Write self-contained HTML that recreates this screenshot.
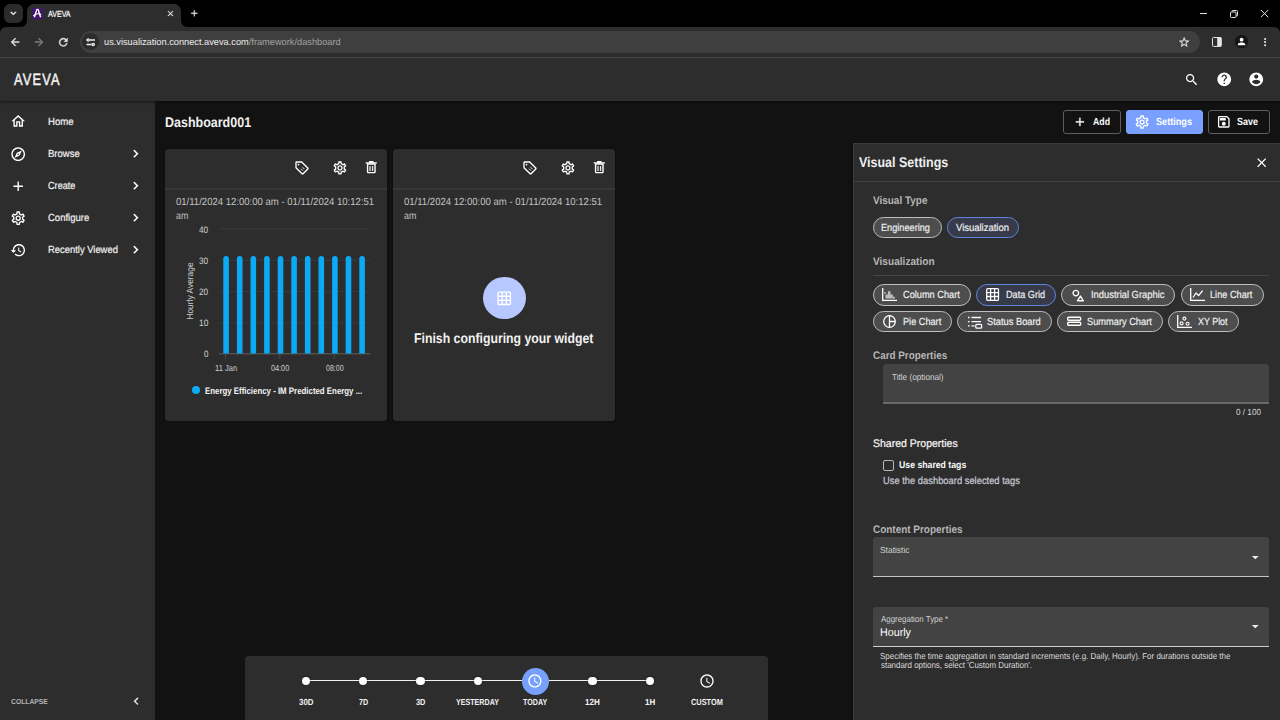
<!DOCTYPE html>
<html lang="en">
<head>
<meta charset="utf-8">
<title>AVEVA</title>
<style>
*{box-sizing:border-box;margin:0;padding:0}
html,body{width:1280px;height:720px;overflow:hidden;background:#000;font-family:"Liberation Sans",sans-serif;color:#fff}
.abs{position:absolute}
.t{position:absolute;white-space:pre;line-height:1;text-rendering:geometricPrecision}
svg{position:absolute;overflow:visible}
#tabsearch{left:4px;top:4px;width:19px;height:19px;border-radius:6px;background:#2b2b2b}
#tab{left:27px;top:4px;width:154px;height:24px;border-radius:7px 7px 0 0;background:#2d2d2d}
#toolbar{left:0;top:27px;width:1280px;height:30px;background:#2d2d2d;border-radius:6px 6px 0 0}
#urlpill{left:80px;top:31px;width:1120px;height:22px;border-radius:11px;background:#3f3f3f}
#sep{left:0;top:57px;width:1280px;height:1px;background:#4d4d4d}
#apphdr{left:0;top:58px;width:1280px;height:42.5px;background:#2d2d2d;box-shadow:0 1px 3px rgba(0,0,0,.55);z-index:3}
#side{left:0;top:100px;width:155px;height:620px;background:#2d2d2d}
#main{left:155px;top:100px;width:1125px;height:620px;background:#121212}
.card{position:absolute;top:148.8px;width:222px;height:271.8px;background:#2d2d2d;border-radius:3.5px;box-shadow:0 0 2px rgba(0,0,0,.6)}
.card .hl{position:absolute;left:0;top:39.2px;width:100%;height:1.6px;background:#373737}
#panel{left:853px;top:143px;width:427px;height:577px;background:#2d2d2d;border-left:1px solid #3d3d3d;border-top:1px solid #3a3a3a;box-shadow:-2px 0 4px rgba(0,0,0,.22)}
#timebar{left:245px;top:656px;width:523px;height:64px;background:#2d2d2d;border-radius:4px 4px 0 0}
.btn{position:absolute;top:110px;height:24px;border:1px solid #5e5e5e;border-radius:3px}
.chip{position:absolute;height:21.5px;border-radius:11px;border:1px solid #bdbdbd;background:#4d4d4d}
.chip.sel{background:#363a49;border-color:#5f86dc}
.field{position:absolute;background:#434343;border-radius:3px 3px 0 0}
.hline{position:absolute;height:1px}
</style>
</head>
<body>
<div class="abs" id="tabsearch"></div>
<div class="abs" id="toolbar"></div>
<div class="abs" id="tab"></div>
<svg style="left:21px;top:21px" width="6" height="6" viewBox="0 0 6 6"><path d="M6 0v6H0A6 6 0 0 0 6 0z" fill="#2d2d2d"/></svg>
<svg style="left:181px;top:21px" width="6" height="6" viewBox="0 0 6 6"><path d="M0 0v6h6A6 6 0 0 1 0 0z" fill="#2d2d2d"/></svg>
<div class="abs" id="urlpill"></div>
<div class="abs" id="sep"></div>
<svg style="left:8.20px;top:8.10px;" width="10.6" height="10.6" viewBox="0 0 24 24" fill="#f0f0f0" stroke="#f0f0f0" stroke-width="1.3"><path d="M7.41 8.59L12 13.17l4.59-4.58L18 10l-6 6-6-6 1.41-1.41z"/></svg>
<div class="abs" style="left:32px;top:8.2px;width:10.8px;height:10.5px;background:#41166f"></div>
<svg style="left:32px;top:8.2px" width="10.8" height="10.5" viewBox="0 0 108 105"><path d="M24 92L49 14h12l25 78" fill="none" stroke="#fff" stroke-width="14" stroke-linejoin="round"/><path d="M12 78C36 56 70 54 92 66" fill="none" stroke="#fff" stroke-width="11"/></svg>
<div class="t" style="left:48.21px;top:10.25px;font-size:8.8px;color:#fff;transform:scaleX(0.8058);transform-origin:0 0;-webkit-text-stroke:0.2px #fff;">AVEVA</div>
<svg style="left:166.10px;top:9.10px;" width="9" height="9" viewBox="0 0 24 24" fill="#e8e8e8" stroke="#e8e8e8" stroke-width="0.8"><path d="M19 6.41L17.59 5 12 10.59 6.41 5 5 6.41 10.59 12 5 17.59 6.41 19 12 13.41 17.59 19 19 17.59 13.41 12z"/></svg>
<svg style="left:189.05px;top:8.35px;" width="10.5" height="10.5" viewBox="0 0 24 24" fill="#efefef" stroke="#efefef" stroke-width="0.5"><path d="M19 13h-6v6h-2v-6H5v-2h6V5h2v6h6v2z"/></svg>
<div class="abs" style="left:1200px;top:13px;width:7px;height:1px;background:#e0e0e0"></div>
<svg style="left:1230px;top:9.5px" width="8" height="8" viewBox="0 0 8 8" fill="none" stroke="#e0e0e0" stroke-width="1"><rect x="0.5" y="2" width="5.5" height="5.5" rx="1"/><path d="M2 2V1.5a1 1 0 0 1 1-1h3.5a1 1 0 0 1 1 1V5a1 1 0 0 1-1 1H6"/></svg>
<svg style="left:1261px;top:9.8px" width="7.2" height="7.2" viewBox="0 0 7.2 7.2" stroke="#e6e6e6" stroke-width="1"><path d="M0 0L7.2 7.2M7.2 0L0 7.2"/></svg>
<svg style="left:8.90px;top:35.90px;" width="12.2" height="12.2" viewBox="0 0 24 24" fill="#e2e2e2" stroke="#e2e2e2" stroke-width="1"><path d="M20 11H7.83l5.59-5.59L12 4l-8 8 8 8 1.41-1.41L7.83 13H20v-2z"/></svg>
<svg style="left:32.60px;top:35.90px;" width="12.2" height="12.2" viewBox="0 0 24 24" fill="#7c7c7c" stroke="#7c7c7c" stroke-width="1"><path d="M12 4l-1.41 1.41L16.17 11H4v2h12.17l-5.58 5.59L12 20l8-8z"/></svg>
<svg style="left:56.70px;top:35.70px;" width="12.6" height="12.6" viewBox="0 0 24 24" fill="#e2e2e2" stroke="#e2e2e2" stroke-width="0.8"><path d="M17.65 6.35C16.2 4.9 14.21 4 12 4c-4.42 0-7.99 3.58-7.99 8s3.57 8 7.99 8c3.73 0 6.84-2.55 7.73-6h-2.08c-.82 2.33-3.04 4-5.65 4-3.31 0-6-2.69-6-6s2.690-6 6-6c1.66 0 3.14.69 4.22 1.78L13 11h7V4l-2.35 2.35z"/></svg>
<div class="abs" style="left:82.4px;top:33.4px;width:16.6px;height:16.6px;border-radius:50%;background:#2c2c2c"></div>
<svg style="left:86px;top:37.5px" width="9.5" height="8.5" viewBox="0 0 95 85" fill="none" stroke="#ececec" stroke-width="13"><path d="M38 20H90M5 20h4M5 65h52M86 65h4"/><circle cx="22" cy="20" r="11"/><circle cx="72" cy="65" r="11"/></svg>
<div class="t" style="left:104.46px;top:37.25px;font-size:9.4px;color:#ececec;transform:scaleX(0.9852);transform-origin:0 0;">us.visualization.connect.aveva.com<span style="color:#a2a2a2">/framework/dashboard</span></div>
<svg style="left:1177.80px;top:35.50px;" width="12.4" height="12.4" viewBox="0 0 24 24" fill="#e2e2e2" stroke="#e2e2e2" stroke-width="0.5"><path d="M22 9.24l-7.19-.62L12 2 9.19 8.63 2 9.24l5.46 4.73L5.82 21 12 17.27 18.18 21l-1.630-7.03L22 9.24zM12 15.4l-3.76 2.27 1-4.28-3.320-2.88 4.38-.38L12 6.1l1.71 4.04 4.38.38-3.320 2.88 1 4.28L12 15.4z"/></svg>
<svg style="left:1212.2px;top:37px" width="9.8" height="9.9" viewBox="0 0 98 99"><rect x="5" y="5" width="88" height="89" rx="10" fill="none" stroke="#e4e4e4" stroke-width="10"/><rect x="52" y="5" width="41" height="89" fill="#e4e4e4"/></svg>
<div class="abs" style="left:1235px;top:35.1px;width:12.7px;height:12.7px;border-radius:50%;background:#151515"></div>
<svg style="left:1235.70px;top:36.10px;" width="11.2" height="11.2" viewBox="0 0 24 24" fill="#fff"><path d="M12 12c2.21 0 4-1.79 4-4s-1.79-4-4-4-4 1.79-4 4 1.79 4 4 4zm0 2c-2.670 0-8 1.34-8 4v2h16v-2c0-2.660-5.330-4-8-4z"/></svg>
<svg style="left:1259.20px;top:35.90px;" width="12.2" height="12.2" viewBox="0 0 24 24" fill="#e2e2e2"><path d="M12 8c1.1 0 2-.9 2-2s-.9-2-2-2-2 .9-2 2 .9 2 2 2zm0 2c-1.1 0-2 .9-2 2s.9 2 2 2 2-.9 2-2-.9-2-2-2zm0 6c-1.1 0-2 .9-2 2s.9 2 2 2 2-.9 2-2-.9-2-2-2z"/></svg>
<div class="abs" id="main"></div>
<div class="abs" id="side"></div>
<div class="abs" id="apphdr"></div>
<div class="t" style="left:14.09px;top:72.25px;font-size:16.5px;color:#f4f4f4;transform:scaleX(0.7730);transform-origin:0 0;z-index:4;-webkit-text-stroke:0.5px #f4f4f4;letter-spacing:1.6px;">AVEVA</div>
<svg style="left:1183.60px;top:71.50px;z-index:4;" width="15.4" height="15.4" viewBox="0 0 24 24" fill="#fff"><path d="M15.5 14h-.79l-.28-.27C15.41 12.59 16 11.11 16 9.5 16 5.91 13.09 3 9.5 3S3 5.91 3 9.5 5.91 16 9.5 16c1.61 0 3.09-.59 4.23-1.57l.27.28v.79l5 4.99L20.49 19l-4.99-5zm-6 0C7.01 14 5 11.99 5 9.5S7.01 5 9.5 5 14 7.01 14 9.5 11.99 14 9.5 14z"/></svg>
<svg style="left:1215.85px;top:71.25px;z-index:4;" width="16.5" height="16.5" viewBox="0 0 24 24" fill="#fff"><path d="M12 2C6.48 2 2 6.48 2 12s4.48 10 10 10 10-4.48 10-10S17.52 2 12 2zm1 17h-2v-2h2v2zm2.07-7.75l-.9.92C13.45 12.9 13 13.5 13 15h-2v-.5c0-1.1.45-2.1 1.17-2.83l1.24-1.26c.37-.36.59-.86.59-1.41 0-1.1-.9-2-2-2s-2 .9-2 2H8c0-2.21 1.79-4 4-4s4 1.79 4 4c0 .88-.36 1.68-.93 2.25z"/></svg>
<svg style="left:1247.65px;top:71.25px;z-index:4;" width="16.5" height="16.5" viewBox="0 0 24 24" fill="#fff"><path d="M12 2C6.48 2 2 6.48 2 12s4.48 10 10 10 10-4.48 10-10S17.52 2 12 2zm0 3c1.66 0 3 1.34 3 3s-1.34 3-3 3-3-1.34-3-3 1.34-3 3-3zm0 14.2c-2.5 0-4.71-1.28-6-3.22.03-1.99 4-3.08 6-3.08 1.99 0 5.97 1.09 6 3.08-1.29 1.94-3.5 3.22-6 3.22z"/></svg>
<div class="t" style="left:47.77px;top:118.25px;font-size:10.3px;color:#f2f2f2;transform:scaleX(0.9341);transform-origin:0 0;-webkit-text-stroke:0.2px currentColor;">Home</div>
<svg style="left:10.40px;top:113.40px;" width="16.4" height="16.4" viewBox="0 0 24 24" fill="#fff"><path d="M12 5.69l5 4.5V18h-2v-6H9v6H7v-7.81l5-4.5M12 3L2 12h3v8h6v-6h2v6h6v-8h3L12 3z"/></svg>
<div class="t" style="left:47.78px;top:150.25px;font-size:10.3px;color:#f2f2f2;transform:scaleX(0.9229);transform-origin:0 0;-webkit-text-stroke:0.2px currentColor;">Browse</div>
<svg style="left:10.40px;top:145.80px;" width="16.4" height="16.4" viewBox="0 0 24 24" fill="#fff"><path d="M12 2C6.48 2 2 6.48 2 12s4.48 10 10 10 10-4.48 10-10S17.52 2 12 2zm0 18c-4.41 0-8-3.59-8-8s3.59-8 8-8 8 3.59 8 8-3.59 8-8 8zm-5.5-2.5l7.51-3.49L17.5 6.5 9.99 9.99 6.5 17.5zm5.5-6.6c.61 0 1.1.49 1.1 1.1s-.49 1.1-1.1 1.1-1.1-.49-1.1-1.1.49-1.1 1.1-1.1z"/></svg>
<svg style="left:128.10px;top:146.30px;" width="15.4" height="15.4" viewBox="0 0 24 24" fill="#fff" stroke="#fff" stroke-width="0.5"><path d="M10 6L8.59 7.41 13.17 12l-4.58 4.59L10 18l6-6z"/></svg>
<div class="t" style="left:48.10px;top:182.25px;font-size:10.3px;color:#f2f2f2;transform:scaleX(0.8862);transform-origin:0 0;-webkit-text-stroke:0.2px currentColor;">Create</div>
<svg style="left:10.40px;top:177.80px;" width="16.4" height="16.4" viewBox="0 0 24 24" fill="#fff"><path d="M19 13h-6v6h-2v-6H5v-2h6V5h2v6h6v2z"/></svg>
<svg style="left:128.10px;top:178.30px;" width="15.4" height="15.4" viewBox="0 0 24 24" fill="#fff" stroke="#fff" stroke-width="0.5"><path d="M10 6L8.59 7.41 13.17 12l-4.58 4.59L10 18l6-6z"/></svg>
<div class="t" style="left:48.09px;top:214.25px;font-size:10.3px;color:#f2f2f2;transform:scaleX(0.9233);transform-origin:0 0;-webkit-text-stroke:0.2px currentColor;">Configure</div>
<svg style="left:10.40px;top:209.80px;" width="16.4" height="16.4" viewBox="0 0 24 24" fill="#fff"><path d="M19.43 12.98c.04-.32.07-.64.07-.98 0-.34-.03-.66-.07-.98l2.11-1.65c.19-.15.24-.42.12-.64l-2-3.46c-.09-.16-.26-.25-.44-.25-.06 0-.12.01-.17.03l-2.49 1c-.52-.4-1.08-.73-1.69-.98l-.38-2.65C14.46 2.18 14.25 2 14 2h-4c-.25 0-.46.18-.49.42l-.38 2.65c-.61.25-1.17.59-1.69.98l-2.49-1c-.06-.02-.12-.03-.18-.03-.17 0-.34.09-.43.25l-2 3.46c-.13.22-.07.49.12.64l2.11 1.65c-.04.32-.07.65-.07.98 0 .33.03.66.07.98l-2.11 1.65c-.19.15-.24.42-.12.64l2 3.46c.09.16.26.25.44.25.06 0 .12-.01.17-.03l2.49-1c.52.4 1.08.73 1.69.98l.38 2.65c.03.24.24.42.49.42h4c.25 0 .46-.18.49-.42l.38-2.65c.61-.25 1.17-.59 1.69-.98l2.49 1c.06.02.12.03.18.03.17 0 .34-.09.43-.25l2-3.46c.12-.22.07-.49-.12-.64l-2.11-1.65zm-1.98-1.71c.04.31.05.52.05.73 0 .21-.02.43-.05.73l-.14 1.13.89.7 1.08.84-.7 1.21-1.27-.51-1.04-.42-.9.68c-.43.32-.84.56-1.25.73l-1.06.43-.16 1.13-.2 1.35h-1.4l-.19-1.35-.16-1.13-1.06-.43c-.43-.18-.83-.41-1.23-.71l-.91-.7-1.06.43-1.27.51-.7-1.21 1.08-.84.89-.7-.14-1.13c-.03-.31-.05-.54-.05-.74s.02-.43.05-.73l.14-1.13-.89-.7-1.08-.84.7-1.21 1.27.51 1.04.42.9-.68c.43-.32.84-.56 1.25-.73l1.06-.43.16-1.13.2-1.35h1.39l.19 1.35.16 1.13 1.06.43c.43.18.83.41 1.23.71l.91.7 1.06-.43 1.27-.51.7 1.21-1.07.85-.89.7.14 1.13zM12 8c-2.21 0-4 1.79-4 4s1.79 4 4 4 4-1.79 4-4-1.79-4-4-4zm0 6c-1.1 0-2-.9-2-2s.9-2 2-2 2 .9 2 2-.9 2-2 2z"/></svg>
<svg style="left:128.10px;top:210.30px;" width="15.4" height="15.4" viewBox="0 0 24 24" fill="#fff" stroke="#fff" stroke-width="0.5"><path d="M10 6L8.59 7.41 13.17 12l-4.58 4.59L10 18l6-6z"/></svg>
<div class="t" style="left:47.79px;top:246.25px;font-size:10.3px;color:#f2f2f2;transform:scaleX(0.9133);transform-origin:0 0;-webkit-text-stroke:0.2px currentColor;">Recently Viewed</div>
<svg style="left:10.40px;top:241.80px;" width="16.4" height="16.4" viewBox="0 0 24 24" fill="#fff"><path d="M13 3c-4.97 0-9 4.03-9 9H1l3.89 3.89.07.14L9 12H6c0-3.87 3.13-7 7-7s7 3.13 7 7-3.13 7-7 7c-1.93 0-3.68-.79-4.94-2.06l-1.42 1.42C8.27 19.99 10.51 21 13 21c4.97 0 9-4.03 9-9s-4.03-9-9-9zm-1 5v5l4.28 2.54.72-1.21-3.5-2.08V8H12z"/></svg>
<svg style="left:128.10px;top:242.30px;" width="15.4" height="15.4" viewBox="0 0 24 24" fill="#fff" stroke="#fff" stroke-width="0.5"><path d="M10 6L8.59 7.41 13.17 12l-4.58 4.59L10 18l6-6z"/></svg>
<div class="t" style="left:10.76px;top:698.25px;font-size:7.2px;color:#b4b4b4;font-weight:bold;transform:scaleX(0.9397);transform-origin:0 0;">COLLAPSE</div>
<svg style="left:128.50px;top:694.30px;" width="14.4" height="14.4" viewBox="0 0 24 24" fill="#e8e8e8" stroke="#e8e8e8" stroke-width="0.6"><path d="M15.41 7.41L14 6l-6 6 6 6 1.41-1.41L10.83 12z"/></svg>
<div class="t" style="left:165.44px;top:115.25px;font-size:14.1px;color:#f0f0f0;font-weight:bold;transform:scaleX(0.8862);transform-origin:0 0;">Dashboard001</div>
<div class="btn" style="left:1063px;width:58px"></div>
<div class="btn" style="left:1126px;width:77px;background:#79a0fe;border-color:#79a0fe"></div>
<div class="btn" style="left:1208px;width:62px"></div>
<svg style="left:1072.60px;top:115.10px;" width="13.8" height="13.8" viewBox="0 0 24 24" fill="#fff" stroke="#fff" stroke-width="0.5"><path d="M19 13h-6v6h-2v-6H5v-2h6V5h2v6h6v2z"/></svg>
<div class="t" style="left:1093.01px;top:118.25px;font-size:10.3px;color:#fff;font-weight:bold;transform:scaleX(0.8486);transform-origin:0 0;">Add</div>
<svg style="left:1134.00px;top:114.20px;" width="16.2" height="16.2" viewBox="0 0 24 24" fill="#fff"><path d="M19.43 12.98c.04-.32.07-.64.07-.98 0-.34-.03-.66-.07-.98l2.11-1.65c.19-.15.24-.42.12-.64l-2-3.46c-.09-.16-.26-.25-.44-.25-.06 0-.12.01-.17.03l-2.49 1c-.52-.4-1.08-.73-1.69-.98l-.38-2.65C14.46 2.18 14.25 2 14 2h-4c-.25 0-.46.18-.49.42l-.38 2.65c-.61.25-1.17.59-1.69.98l-2.49-1c-.06-.02-.12-.03-.18-.03-.17 0-.34.09-.43.25l-2 3.46c-.13.22-.07.49.12.64l2.11 1.65c-.04.32-.07.65-.07.98 0 .33.03.66.07.98l-2.11 1.65c-.19.15-.24.42-.12.64l2 3.46c.09.16.26.25.44.25.06 0 .12-.01.17-.03l2.49-1c.52.4 1.08.73 1.69.98l.38 2.65c.03.24.24.42.49.42h4c.25 0 .46-.18.49-.42l.38-2.65c.61-.25 1.17-.59 1.69-.98l2.49 1c.06.02.12.03.18.03.17 0 .34-.09.43-.25l2-3.46c.12-.22.07-.49-.12-.64l-2.11-1.65zm-1.98-1.71c.04.31.05.52.05.73 0 .21-.02.43-.05.73l-.14 1.13.89.7 1.08.84-.7 1.21-1.27-.51-1.04-.42-.9.68c-.43.32-.84.56-1.25.73l-1.06.43-.16 1.13-.2 1.35h-1.4l-.19-1.35-.16-1.13-1.06-.43c-.43-.18-.83-.41-1.23-.71l-.91-.7-1.06.43-1.27.51-.7-1.21 1.08-.84.89-.7-.14-1.13c-.03-.31-.05-.54-.05-.74s.02-.43.05-.73l.14-1.13-.89-.7-1.08-.84.7-1.21 1.27.51 1.04.42.9-.68c.43-.32.84-.56 1.25-.73l1.06-.43.16-1.13.2-1.35h1.39l.19 1.35.16 1.13 1.06.43c.43.18.83.41 1.23.71l.91.7 1.06-.43 1.27-.51.7 1.21-1.07.85-.89.7.14 1.13zM12 8c-2.21 0-4 1.79-4 4s1.79 4 4 4 4-1.79 4-4-1.79-4-4-4zm0 6c-1.1 0-2-.9-2-2s.9-2 2-2 2 .9 2 2-.9 2-2 2z"/></svg>
<div class="t" style="left:1155.67px;top:118.25px;font-size:10.3px;color:#fff;font-weight:bold;transform:scaleX(0.8857);transform-origin:0 0;">Settings</div>
<svg style="left:1216.10px;top:114.40px;" width="15.6" height="15.6" viewBox="0 0 24 24" fill="#fff"><path d="M17 3H5c-1.11 0-2 .9-2 2v14c0 1.1.89 2 2 2h14c1.1 0 2-.9 2-2V7l-4-4zm2 16H5V5h11.17L19 7.83V19zm-7-7c-1.66 0-3 1.34-3 3s1.34 3 3 3 3-1.34 3-3-1.34-3-3-3zM6 6h9v4H6z"/></svg>
<div class="t" style="left:1237.28px;top:118.25px;font-size:10.3px;color:#fff;font-weight:bold;transform:scaleX(0.8733);transform-origin:0 0;">Save</div>
<div class="card" style="left:165px"><div class="hl"></div></div>
<svg style="left:294.00px;top:159.70px;" width="16" height="16" viewBox="0 0 24 24" fill="#fff"><path d="M21.41 11.41l-8.83-8.83c-.37-.37-.88-.58-1.41-.58H4c-1.1 0-2 .9-2 2v7.17c0 .53.21 1.04.59 1.41l8.83 8.83c.78.78 2.05.78 2.83 0l7.17-7.17c.78-.78.78-2.04-.01-2.83zM12.83 20L4 11.17V4h7.17L20 12.83 12.83 20z"/><circle cx="6.8" cy="6.8" r="1.3"/><path d="M10.6 13.2l2.6 2.6M12.9 10.9l2.6 2.6" stroke="#fff" stroke-width="1.4" fill="none"/></svg>
<svg style="left:331.65px;top:159.55px;" width="15.9" height="15.9" viewBox="0 0 24 24" fill="#fff"><path d="M19.43 12.98c.04-.32.07-.64.07-.98 0-.34-.03-.66-.07-.98l2.11-1.65c.19-.15.24-.42.12-.64l-2-3.46c-.09-.16-.26-.25-.44-.25-.06 0-.12.01-.17.03l-2.49 1c-.52-.4-1.08-.73-1.69-.98l-.38-2.65C14.46 2.18 14.25 2 14 2h-4c-.25 0-.46.18-.49.42l-.38 2.65c-.61.25-1.17.59-1.69.98l-2.49-1c-.06-.02-.12-.03-.18-.03-.17 0-.34.09-.43.25l-2 3.46c-.13.22-.07.49.12.64l2.11 1.65c-.04.32-.07.65-.07.98 0 .33.03.66.07.98l-2.11 1.65c-.19.15-.24.42-.12.64l2 3.46c.09.16.26.25.44.25.06 0 .12-.01.17-.03l2.49-1c.52.4 1.08.73 1.69.98l.38 2.65c.03.24.24.42.49.42h4c.25 0 .46-.18.49-.42l.38-2.65c.61-.25 1.17-.59 1.69-.98l2.49 1c.06.02.12.03.18.03.17 0 .34-.09.43-.25l2-3.46c.12-.22.07-.49-.12-.64l-2.11-1.65zm-1.98-1.71c.04.31.05.52.05.73 0 .21-.02.43-.05.73l-.14 1.13.89.7 1.08.84-.7 1.21-1.27-.51-1.04-.42-.9.68c-.43.32-.84.56-1.25.73l-1.06.43-.16 1.13-.2 1.35h-1.4l-.19-1.35-.16-1.13-1.06-.43c-.43-.18-.83-.41-1.23-.71l-.91-.7-1.06.43-1.27.51-.7-1.21 1.08-.84.89-.7-.14-1.13c-.03-.31-.05-.54-.05-.74s.02-.43.05-.73l.14-1.13-.89-.7-1.08-.84.7-1.21 1.27.51 1.04.42.9-.68c.43-.32.84-.56 1.25-.73l1.06-.43.16-1.13.2-1.35h1.39l.19 1.35.16 1.13 1.06.43c.43.18.83.41 1.23.71l.91.7 1.06-.43 1.27-.51.7 1.21-1.07.85-.89.7.14 1.13zM12 8c-2.21 0-4 1.79-4 4s1.79 4 4 4 4-1.79 4-4-1.79-4-4-4zm0 6c-1.1 0-2-.9-2-2s.9-2 2-2 2 .9 2 2-.9 2-2 2z"/></svg>
<svg style="left:363.15px;top:158.70px;" width="16.6" height="16.6" viewBox="0 0 24 24" fill="#fff"><path d="M6.6 7.3h10.8v11.4a1 1 0 0 1-1 1h-8.8a1 1 0 0 1-1-1z" fill="none" stroke="#fff" stroke-width="2"/><path d="M3.9 4.6h16.2v1.9H3.9zM8.8 2.9h6.4v1.9H8.8z" fill="#fff"/><path d="M9.2 10h1.9v7.4H9.2zM12.9 10h1.9v7.4h-1.9z" fill="#e4e4e4"/></svg>
<div class="t" style="left:175.66px;top:198.25px;font-size:10.3px;color:#c2c2c2;transform:scaleX(0.9271);transform-origin:0 0;">01/11/2024 12:00:00 am - 01/11/2024 10:12:51</div>
<div class="t" style="left:175.64px;top:212.25px;font-size:10.3px;color:#c2c2c2;transform:scaleX(0.8666);transform-origin:0 0;">am</div>
<div class="card" style="left:393px"><div class="hl"></div></div>
<svg style="left:522.00px;top:159.70px;" width="16" height="16" viewBox="0 0 24 24" fill="#fff"><path d="M21.41 11.41l-8.83-8.83c-.37-.37-.88-.58-1.41-.58H4c-1.1 0-2 .9-2 2v7.17c0 .53.21 1.04.59 1.41l8.83 8.83c.78.78 2.05.78 2.83 0l7.17-7.17c.78-.78.78-2.04-.01-2.83zM12.83 20L4 11.17V4h7.17L20 12.83 12.83 20z"/><circle cx="6.8" cy="6.8" r="1.3"/><path d="M10.6 13.2l2.6 2.6M12.9 10.9l2.6 2.6" stroke="#fff" stroke-width="1.4" fill="none"/></svg>
<svg style="left:559.65px;top:159.55px;" width="15.9" height="15.9" viewBox="0 0 24 24" fill="#fff"><path d="M19.43 12.98c.04-.32.07-.64.07-.98 0-.34-.03-.66-.07-.98l2.11-1.65c.19-.15.24-.42.12-.64l-2-3.46c-.09-.16-.26-.25-.44-.25-.06 0-.12.01-.17.03l-2.49 1c-.52-.4-1.08-.73-1.69-.98l-.38-2.65C14.46 2.18 14.25 2 14 2h-4c-.25 0-.46.18-.49.42l-.38 2.65c-.61.25-1.17.59-1.69.98l-2.49-1c-.06-.02-.12-.03-.18-.03-.17 0-.34.09-.43.25l-2 3.46c-.13.22-.07.49.12.64l2.11 1.65c-.04.32-.07.65-.07.98 0 .33.03.66.07.98l-2.11 1.65c-.19.15-.24.42-.12.64l2 3.46c.09.16.26.25.44.25.06 0 .12-.01.17-.03l2.49-1c.52.4 1.08.73 1.69.98l.38 2.65c.03.24.24.42.49.42h4c.25 0 .46-.18.49-.42l.38-2.65c.61-.25 1.17-.59 1.69-.98l2.49 1c.06.02.12.03.18.03.17 0 .34-.09.43-.25l2-3.46c.12-.22.07-.49-.12-.64l-2.11-1.65zm-1.98-1.71c.04.31.05.52.05.73 0 .21-.02.43-.05.73l-.14 1.13.89.7 1.08.84-.7 1.21-1.27-.51-1.04-.42-.9.68c-.43.32-.84.56-1.25.73l-1.06.43-.16 1.13-.2 1.35h-1.4l-.19-1.35-.16-1.13-1.06-.43c-.43-.18-.83-.41-1.23-.71l-.91-.7-1.06.43-1.27.51-.7-1.21 1.08-.84.89-.7-.14-1.13c-.03-.31-.05-.54-.05-.74s.02-.43.05-.73l.14-1.13-.89-.7-1.08-.84.7-1.21 1.27.51 1.04.42.9-.68c.43-.32.84-.56 1.25-.73l1.06-.43.16-1.13.2-1.35h1.39l.19 1.35.16 1.13 1.06.43c.43.18.83.41 1.23.71l.91.7 1.06-.43 1.27-.51.7 1.21-1.07.85-.89.7.14 1.13zM12 8c-2.21 0-4 1.79-4 4s1.79 4 4 4 4-1.79 4-4-1.79-4-4-4zm0 6c-1.1 0-2-.9-2-2s.9-2 2-2 2 .9 2 2-.9 2-2 2z"/></svg>
<svg style="left:591.15px;top:158.70px;" width="16.6" height="16.6" viewBox="0 0 24 24" fill="#fff"><path d="M6.6 7.3h10.8v11.4a1 1 0 0 1-1 1h-8.8a1 1 0 0 1-1-1z" fill="none" stroke="#fff" stroke-width="2"/><path d="M3.9 4.6h16.2v1.9H3.9zM8.8 2.9h6.4v1.9H8.8z" fill="#fff"/><path d="M9.2 10h1.9v7.4H9.2zM12.9 10h1.9v7.4h-1.9z" fill="#e4e4e4"/></svg>
<div class="t" style="left:403.66px;top:198.25px;font-size:10.3px;color:#c2c2c2;transform:scaleX(0.9271);transform-origin:0 0;">01/11/2024 12:00:00 am - 01/11/2024 10:12:51</div>
<div class="t" style="left:403.64px;top:212.25px;font-size:10.3px;color:#c2c2c2;transform:scaleX(0.8666);transform-origin:0 0;">am</div>
<svg style="left:165px;top:149px" width="222" height="272" viewBox="165 149 222 272"><rect x="219" y="228.2" width="151" height="1.2" fill="#383838"/><rect x="219" y="259.6" width="151" height="1.2" fill="#383838"/><rect x="219" y="290.9" width="151" height="1.2" fill="#383838"/><rect x="219" y="322.2" width="151" height="1.2" fill="#383838"/><rect x="219" y="353.3" width="151" height="1" fill="#626262"/><rect x="224.9" y="354" width="1" height="5" fill="#4a4a4a"/><rect x="279.3" y="354" width="1" height="5" fill="#4a4a4a"/><rect x="333.8" y="354" width="1" height="5" fill="#4a4a4a"/><path d="M223.30 353.6V258.7a2.8 2.8 0 0 1 5.6 0V353.6z" fill="#0ca9f5"/><path d="M236.90 353.6V258.7a2.8 2.8 0 0 1 5.6 0V353.6z" fill="#0ca9f5"/><path d="M250.50 353.6V258.7a2.8 2.8 0 0 1 5.6 0V353.6z" fill="#0ca9f5"/><path d="M264.10 353.6V258.7a2.8 2.8 0 0 1 5.6 0V353.6z" fill="#0ca9f5"/><path d="M277.70 353.6V258.7a2.8 2.8 0 0 1 5.6 0V353.6z" fill="#0ca9f5"/><path d="M291.30 353.6V258.7a2.8 2.8 0 0 1 5.6 0V353.6z" fill="#0ca9f5"/><path d="M304.90 353.6V258.7a2.8 2.8 0 0 1 5.6 0V353.6z" fill="#0ca9f5"/><path d="M318.50 353.6V258.7a2.8 2.8 0 0 1 5.6 0V353.6z" fill="#0ca9f5"/><path d="M332.10 353.6V258.7a2.8 2.8 0 0 1 5.6 0V353.6z" fill="#0ca9f5"/><path d="M345.70 353.6V258.7a2.8 2.8 0 0 1 5.6 0V353.6z" fill="#0ca9f5"/><path d="M359.30 353.6V258.7a2.8 2.8 0 0 1 5.6 0V353.6z" fill="#0ca9f5"/></svg>
<div class="t" style="left:199.32px;top:225.25px;font-size:9.4px;color:#d4d4d4;transform:scaleX(0.8761);transform-origin:0 0;">40</div>
<div class="t" style="left:199.28px;top:256.25px;font-size:9.4px;color:#d4d4d4;transform:scaleX(0.8798);transform-origin:0 0;">30</div>
<div class="t" style="left:199.41px;top:287.25px;font-size:9.4px;color:#d4d4d4;transform:scaleX(0.8674);transform-origin:0 0;">20</div>
<div class="t" style="left:199.11px;top:318.25px;font-size:9.4px;color:#d4d4d4;transform:scaleX(0.8964);transform-origin:0 0;">10</div>
<div class="t" style="left:204.21px;top:349.25px;font-size:9.4px;color:#d4d4d4;transform:scaleX(0.8465);transform-origin:0 0;">0</div>
<div class="t" style="left:189.6px;top:291px;font-size:9px;color:#cfcfcf;transform:translate(-50%,-50%) rotate(-90deg) scaleX(0.9320)">Hourly Average</div>
<div class="t" style="left:214.62px;top:364.25px;font-size:8.8px;color:#cfcfcf;transform:scaleX(0.8607);transform-origin:0 0;">11 Jan</div>
<div class="t" style="left:270.98px;top:364.25px;font-size:8.8px;color:#cfcfcf;transform:scaleX(0.8279);transform-origin:0 0;">04:00</div>
<div class="t" style="left:325.79px;top:364.25px;font-size:8.8px;color:#cfcfcf;transform:scaleX(0.8000);transform-origin:0 0;">08:00</div>
<div class="abs" style="left:192.1px;top:386px;width:8px;height:8px;border-radius:50%;background:#0ca9f5"></div>
<div class="t" style="left:204.73px;top:386.25px;font-size:9.4px;color:#f4f4f4;font-weight:bold;transform:scaleX(0.8383);transform-origin:0 0;">Energy Efficiency - IM Predicted Energy ...</div>
<div class="abs" style="left:482.8px;top:276.6px;width:42.8px;height:42.8px;border-radius:50%;background:#b7c7ff"></div>
<svg style="left:495.85px;top:289.85px;" width="16.5" height="16.5" viewBox="0 0 24 24" fill="#fff"><path d="M20 2H4c-1.1 0-2 .9-2 2v16c0 1.1.9 2 2 2h16c1.1 0 2-.9 2-2V4c0-1.1-.9-2-2-2zM8 20H4v-4h4v4zm0-6H4v-4h4v4zm0-6H4V4h4v4zm6 12h-4v-4h4v4zm0-6h-4v-4h4v4zm0-6h-4V4h4v4zm6 12h-4v-4h4v4zm0-6h-4v-4h4v4zm0-6h-4V4h4v4z"/></svg>
<div class="t" style="left:414.05px;top:331.25px;font-size:14.1px;color:#f2f2f2;font-weight:bold;transform:scaleX(0.8711);transform-origin:0 0;">Finish configuring your widget</div>
<div class="abs" id="timebar"></div>
<div class="abs" style="left:306px;top:680.1px;width:344px;height:1.1px;background:#f0f0f0"></div>
<div class="abs" style="left:301.9px;top:676.9px;width:8.4px;height:8.4px;border-radius:50%;background:#fff;box-shadow:0 0 1.5px rgba(0,0,0,.6)"></div>
<div class="t" style="left:298.79px;top:698.25px;font-size:8.8px;color:#f2f2f2;font-weight:bold;transform:scaleX(0.8975);transform-origin:0 0;">30D</div>
<div class="abs" style="left:359.1px;top:676.9px;width:8.4px;height:8.4px;border-radius:50%;background:#fff;box-shadow:0 0 1.5px rgba(0,0,0,.6)"></div>
<div class="t" style="left:358.68px;top:698.25px;font-size:8.8px;color:#f2f2f2;font-weight:bold;transform:scaleX(0.8110);transform-origin:0 0;">7D</div>
<div class="abs" style="left:416.4px;top:676.9px;width:8.4px;height:8.4px;border-radius:50%;background:#fff;box-shadow:0 0 1.5px rgba(0,0,0,.6)"></div>
<div class="t" style="left:415.76px;top:698.25px;font-size:8.8px;color:#f2f2f2;font-weight:bold;transform:scaleX(0.8397);transform-origin:0 0;">3D</div>
<div class="abs" style="left:473.7px;top:676.9px;width:8.4px;height:8.4px;border-radius:50%;background:#fff;box-shadow:0 0 1.5px rgba(0,0,0,.6)"></div>
<div class="t" style="left:456.44px;top:698.25px;font-size:8.8px;color:#f2f2f2;font-weight:bold;transform:scaleX(0.8096);transform-origin:0 0;">YESTERDAY</div>
<div class="abs" style="left:521.8px;top:667.6px;width:27px;height:27px;border-radius:50%;background:#76a0fc"></div>
<svg style="left:527.40px;top:673.10px;" width="15.8" height="15.8" viewBox="0 0 24 24" fill="#fff"><path d="M11.99 2C6.47 2 2 6.48 2 12s4.47 10 9.99 10C17.52 22 22 17.52 22 12S17.52 2 11.99 2zM12 20c-4.42 0-8-3.58-8-8s3.58-8 8-8 8 3.58 8 8-3.58 8-8 8zm.5-13H11v6l5.25 3.15.75-1.23-4.5-2.67z"/></svg>
<div class="t" style="left:523.25px;top:698.25px;font-size:8.8px;color:#f2f2f2;font-weight:bold;transform:scaleX(0.8099);transform-origin:0 0;">TODAY</div>
<div class="abs" style="left:588.3px;top:676.9px;width:8.4px;height:8.4px;border-radius:50%;background:#fff;box-shadow:0 0 1.5px rgba(0,0,0,.6)"></div>
<div class="t" style="left:585.04px;top:698.25px;font-size:8.8px;color:#f2f2f2;font-weight:bold;transform:scaleX(0.9201);transform-origin:0 0;">12H</div>
<div class="abs" style="left:645.7px;top:676.9px;width:8.4px;height:8.4px;border-radius:50%;background:#fff;box-shadow:0 0 1.5px rgba(0,0,0,.6)"></div>
<div class="t" style="left:644.74px;top:698.25px;font-size:8.8px;color:#f2f2f2;font-weight:bold;transform:scaleX(0.9096);transform-origin:0 0;">1H</div>
<svg style="left:699.40px;top:673.10px;" width="16" height="16" viewBox="0 0 24 24" fill="#fff"><path d="M11.99 2C6.47 2 2 6.48 2 12s4.47 10 9.99 10C17.52 22 22 17.52 22 12S17.52 2 11.99 2zM12 20c-4.42 0-8-3.58-8-8s3.58-8 8-8 8 3.58 8 8-3.58 8-8 8zm.5-13H11v6l5.25 3.15.75-1.23-4.5-2.67z"/></svg>
<div class="t" style="left:691.47px;top:698.25px;font-size:8.8px;color:#f2f2f2;font-weight:bold;transform:scaleX(0.8372);transform-origin:0 0;">CUSTOM</div>
<div class="abs" id="panel"></div>
<div class="t" style="left:859.42px;top:155.25px;font-size:14.1px;color:#efefef;font-weight:bold;transform:scaleX(0.8852);transform-origin:0 0;">Visual Settings</div>
<svg style="left:1253.80px;top:154.80px;" width="15.4" height="15.4" viewBox="0 0 24 24" fill="#fff"><path d="M19 6.41L17.59 5 12 10.59 6.41 5 5 6.41 10.59 12 5 17.59 6.41 19 12 13.41 17.59 19 19 17.59 13.41 12z"/></svg>
<div class="hline" style="left:854px;top:181px;width:426px;background:#414141"></div>
<div class="t" style="left:872.89px;top:196.25px;font-size:11px;color:#b6b6b6;font-weight:bold;transform:scaleX(0.9052);transform-origin:0 0;">Visual Type</div>
<div class="chip" style="left:872.6px;top:216.6px;width:69px"></div>
<div class="chip sel" style="left:946.6px;top:216.6px;width:72.8px"></div>
<div class="t" style="left:881.40px;top:224.25px;font-size:10.3px;color:#ececec;transform:scaleX(0.8903);transform-origin:0 0;-webkit-text-stroke:0.22px currentColor;">Engineering</div>
<div class="t" style="left:955.53px;top:224.25px;font-size:10.3px;color:#ececec;transform:scaleX(0.9183);transform-origin:0 0;-webkit-text-stroke:0.22px currentColor;">Visualization</div>
<div class="t" style="left:872.89px;top:257.25px;font-size:11px;color:#b6b6b6;font-weight:bold;transform:scaleX(0.9193);transform-origin:0 0;">Visualization</div>
<div class="hline" style="left:872.6px;top:275.2px;width:396.5px;background:#454545"></div>
<div class="chip " style="left:872.7px;top:284.0px;width:98.3px"></div>
<svg style="left:881.60px;top:288.40px" width="15" height="13" viewBox="0 0 15 13" fill="none" stroke="#fff" stroke-width="1.3"><path d="M0.7 0v12.3H15" /><path d="M3.5 10.5V6.5h2.4V3.2h2.6v3.3h2.3v2.2h2.2v1.8z" fill="#bdbdbd" stroke="none"/><path d="M2.2 5h1.6" stroke-width="1"/></svg>
<div class="t" style="left:902.80px;top:291.25px;font-size:10.3px;color:#ececec;transform:scaleX(0.8935);transform-origin:0 0;-webkit-text-stroke:0.22px currentColor;">Column Chart</div>
<div class="chip sel" style="left:976.3px;top:284.0px;width:79.7px"></div>
<svg style="left:986.00px;top:288.20px" width="15" height="13" viewBox="0 0 15 13" fill="none" stroke="#fff" stroke-width="1.3"><rect x="0.7" y="0.7" width="11.8" height="11.6" rx="1"/><path d="M4.6 0.7v11.6M8.6 0.7v11.6M0.7 4.6h11.8M0.7 8.5h11.8"/></svg>
<div class="t" style="left:1006.41px;top:291.25px;font-size:10.3px;color:#ececec;transform:scaleX(0.8855);transform-origin:0 0;-webkit-text-stroke:0.22px currentColor;">Data Grid</div>
<div class="chip " style="left:1061.0px;top:284.0px;width:114.4px"></div>
<svg style="left:1071.60px;top:288.60px" width="15" height="13" viewBox="0 0 15 13" fill="none" stroke="#fff" stroke-width="1.3"><circle cx="3.85" cy="4.1" r="2.8"/><path d="M8.4 7l2.9 4.8H5.5z" stroke-linejoin="round" stroke-width="1.4"/></svg>
<div class="t" style="left:1090.89px;top:291.25px;font-size:10.3px;color:#ececec;transform:scaleX(0.9095);transform-origin:0 0;-webkit-text-stroke:0.22px currentColor;">Industrial Graphic</div>
<div class="chip " style="left:1180.6px;top:284.0px;width:83.4px"></div>
<svg style="left:1190.00px;top:288.40px" width="15" height="13" viewBox="0 0 15 13" fill="none" stroke="#fff" stroke-width="1.3"><path d="M0.7 0v12.3H15"/><path d="M3 9.5l3-4.5 2.6 2.6 4-5" stroke-linejoin="round"/></svg>
<div class="t" style="left:1210.40px;top:291.25px;font-size:10.3px;color:#ececec;transform:scaleX(0.8912);transform-origin:0 0;-webkit-text-stroke:0.22px currentColor;">Line Chart</div>
<div class="chip " style="left:872.7px;top:310.8px;width:79.2px"></div>
<svg style="left:882.90px;top:314.90px" width="15" height="13" viewBox="0 0 15 13" fill="none" stroke="#fff" stroke-width="1.3"><circle cx="6.5" cy="6.5" r="5.8"/><path d="M6.5 0.7v11.6M6.5 6.5h5.8"/></svg>
<div class="t" style="left:902.50px;top:318.25px;font-size:10.3px;color:#ececec;transform:scaleX(0.8904);transform-origin:0 0;-webkit-text-stroke:0.22px currentColor;">Pie Chart</div>
<div class="chip " style="left:957.1px;top:310.8px;width:94.7px"></div>
<svg style="left:967.60px;top:315.60px" width="15" height="13" viewBox="0 0 15 13" fill="none" stroke="#fff" stroke-width="1.3"><path d="M3.5 1.5h9.5M3.5 5.7h9.5M3.5 9.9h3" /><path d="M0 1.5h1.6M0 5.7h1.6M0 9.9h1.6"/><rect x="7.8" y="8.3" width="5.8" height="3.9" rx="1"/></svg>
<div class="t" style="left:987.43px;top:318.25px;font-size:10.3px;color:#ececec;transform:scaleX(0.9029);transform-origin:0 0;-webkit-text-stroke:0.22px currentColor;">Status Board</div>
<div class="chip " style="left:1057.2px;top:310.8px;width:105.6px"></div>
<svg style="left:1066.90px;top:315.10px" width="15" height="13" viewBox="0 0 15 13" fill="none" stroke="#fff" stroke-width="1.3"><rect x="0.7" y="2.3" width="13" height="3" rx="1" stroke-width="1.4"/><rect x="0.7" y="7.3" width="13" height="3" rx="1" stroke-width="1.4"/></svg>
<div class="t" style="left:1086.83px;top:318.25px;font-size:10.3px;color:#ececec;transform:scaleX(0.8990);transform-origin:0 0;-webkit-text-stroke:0.22px currentColor;">Summary Chart</div>
<div class="chip " style="left:1168.0px;top:310.8px;width:71.3px"></div>
<svg style="left:1177.30px;top:315.20px" width="15" height="13" viewBox="0 0 15 13" fill="none" stroke="#fff" stroke-width="1.3"><path d="M0.7 0v12.3H15"/><circle cx="4.6" cy="8.4" r="1.5" stroke-width="1.1"/><circle cx="7.4" cy="3.6" r="1.5" stroke-width="1.1"/><circle cx="10.6" cy="8.8" r="1.5" stroke-width="1.1"/></svg>
<div class="t" style="left:1198.48px;top:318.25px;font-size:10.3px;color:#ececec;transform:scaleX(0.8646);transform-origin:0 0;-webkit-text-stroke:0.22px currentColor;">XY Plot</div>
<div class="t" style="left:872.87px;top:351.25px;font-size:11px;color:#b6b6b6;font-weight:bold;transform:scaleX(0.8983);transform-origin:0 0;">Card Properties</div>
<div class="field" style="left:883px;top:364.2px;width:386px;height:39px"></div>
<div class="hline" style="left:883px;top:402.4px;width:386px;height:1.4px;background:#696969"></div>
<div class="t" style="left:891.71px;top:373.25px;font-size:8.8px;color:#d2d2d2;transform:scaleX(0.9311);transform-origin:0 0;">Title (optional)</div>
<div class="t" style="left:1236.05px;top:408.25px;font-size:8.8px;color:#dcdcdc;transform:scaleX(0.9283);transform-origin:0 0;">0 / 100</div>
<div class="t" style="left:872.57px;top:439.25px;font-size:11px;color:#f6f6f6;transform:scaleX(0.9548);transform-origin:0 0;-webkit-text-stroke:0.22px currentColor;">Shared Properties</div>
<div class="abs" style="left:883.2px;top:460.1px;width:10.8px;height:10.8px;border:1.4px solid #b8b8b8;border-radius:2px"></div>
<div class="t" style="left:899.46px;top:461.25px;font-size:9.8px;color:#fafafa;font-weight:bold;transform:scaleX(0.8885);transform-origin:0 0;">Use shared tags</div>
<div class="t" style="left:882.83px;top:477.25px;font-size:10.3px;color:#c8c8d4;transform:scaleX(0.9092);transform-origin:0 0;-webkit-text-stroke:0.22px currentColor;">Use the dashboard selected tags</div>
<div class="t" style="left:872.87px;top:525.25px;font-size:11px;color:#b6b6b6;font-weight:bold;transform:scaleX(0.9048);transform-origin:0 0;">Content Properties</div>
<div class="field" style="left:872.7px;top:537.2px;width:396.3px;height:39.6px"></div>
<div class="hline" style="left:872.7px;top:576px;width:396.3px;background:#c4c4c4"></div>
<div class="t" style="left:880.44px;top:546.25px;font-size:8.8px;color:#d2d2d2;transform:scaleX(0.9585);transform-origin:0 0;">Statistic</div>
<svg style="left:1247.05px;top:548.80px;" width="16.6" height="16.6" viewBox="0 0 24 24" fill="#ececec"><path d="M7 10l5 5 5-5z"/></svg>
<div class="field" style="left:872.7px;top:607.1px;width:396.3px;height:39.6px"></div>
<div class="hline" style="left:872.7px;top:646px;width:396.3px;background:#d0d0d0"></div>
<div class="t" style="left:880.90px;top:615.25px;font-size:8.8px;color:#d2d2d2;transform:scaleX(0.8995);transform-origin:0 0;">Aggregation Type *</div>
<div class="t" style="left:880.30px;top:628.25px;font-size:11.4px;color:#fff;transform:scaleX(0.9397);transform-origin:0 0;">Hourly</div>
<svg style="left:1247.05px;top:618.00px;" width="16.6" height="16.6" viewBox="0 0 24 24" fill="#ececec"><path d="M7 10l5 5 5-5z"/></svg>
<div class="t" style="left:880.47px;top:652.25px;font-size:8.8px;color:#dadada;transform:scaleX(0.9064);transform-origin:0 0;">Specifies the time aggregation in standard increments (e.g. Daily, Hourly). For durations outside the</div>
<div class="t" style="left:880.72px;top:661.25px;font-size:8.8px;color:#dadada;transform:scaleX(0.9036);transform-origin:0 0;">standard options, select &#x27;Custom Duration&#x27;.</div>
</body>
</html>
